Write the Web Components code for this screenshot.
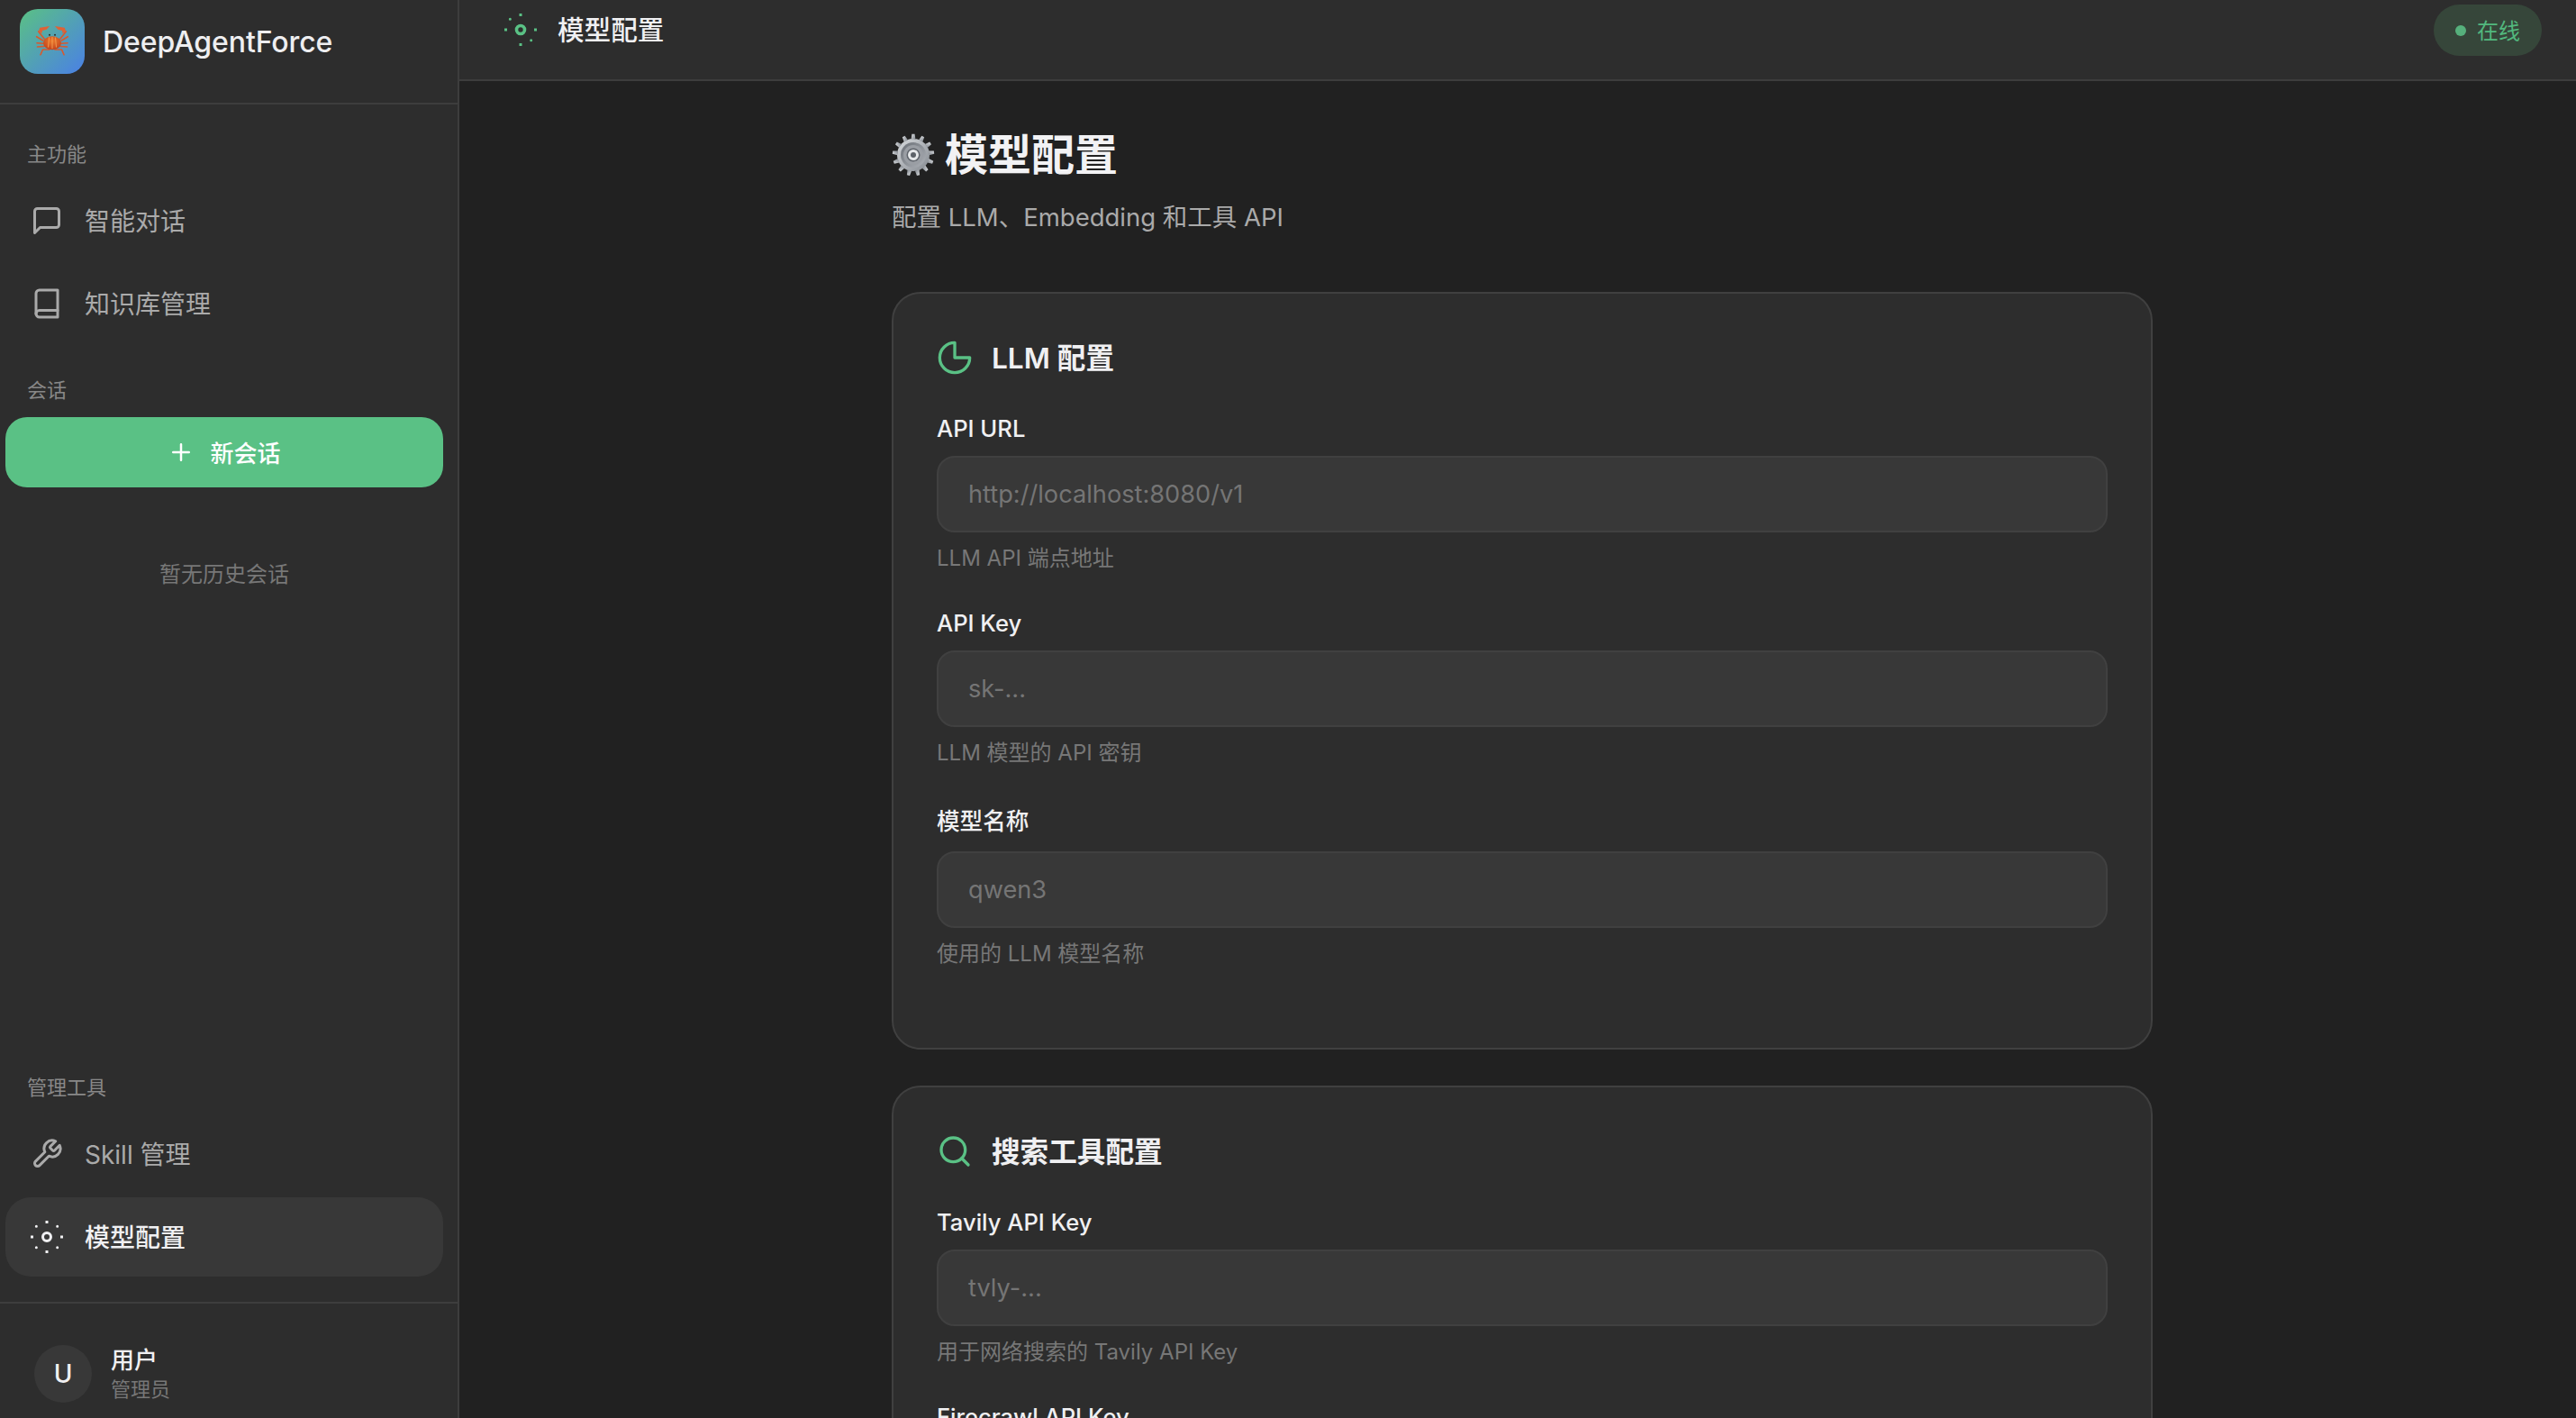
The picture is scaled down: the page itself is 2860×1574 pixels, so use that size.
<!DOCTYPE html>
<html lang="zh">
<head>
<meta charset="utf-8">
<title>DeepAgentForce</title>
<style>
  html, body { margin: 0; height: 100%; overflow: hidden; background: #212121; }
  body { font-family: Inter, "Noto Sans CJK SC", sans-serif; }
</style>
</head>
<body>
<app-shell>
  <side-bar slot="side">
    <section-label style="--top:40px">主功能</section-label>
    <nav-item icon="chat">智能对话</nav-item>
    <nav-item icon="book">知识库管理</nav-item>
    <section-label style="--top:33px">会话</section-label>
    <new-chat-button>新会话</new-chat-button>
    <empty-note>暂无历史会话</empty-note>
    <side-spacer></side-spacer>
    <section-label style="--top:0px">管理工具</section-label>
    <nav-item icon="wrench">Skill 管理</nav-item>
    <nav-item icon="gear" active>模型配置</nav-item>
  </side-bar>
  <top-bar slot="top">模型配置</top-bar>
  <config-page>
    <page-title sub="配置 LLM、Embedding 和工具 API">模型配置</page-title>
    <config-card icon="pie" heading="LLM 配置">
      <config-field label="API URL" placeholder="http://localhost:8080/v1" hint="LLM API 端点地址"></config-field>
      <config-field label="API Key" placeholder="sk-..." hint="LLM 模型的 API 密钥"></config-field>
      <config-field label="模型名称" placeholder="qwen3" hint="使用的 LLM 模型名称"></config-field>
    </config-card>
    <config-card icon="search" heading="搜索工具配置">
      <config-field label="Tavily API Key" placeholder="tvly-..." hint="用于网络搜索的 Tavily API Key"></config-field>
      <config-field label="Firecrawl API Key"></config-field>
    </config-card>
  </config-page>
</app-shell>

<script>
const AXIS_DOTS = '<path stroke-linecap="square" d="M12 1h.01M12 23h.01M1 12h.01M23 12h.01"/>';
const ICONS = {
  chat: '<path d="M21 15a2 2 0 0 1-2 2H7l-4 4V5a2 2 0 0 1 2-2h14a2 2 0 0 1 2 2z"/>',
  book: '<path d="M4 19.5A2.5 2.5 0 0 1 6.5 17H20"/><path d="M6.5 2H20v20H6.5A2.5 2.5 0 0 1 4 19.5v-15A2.5 2.5 0 0 1 6.5 2z"/>',
  wrench: '<path d="M14.7 6.3a1 1 0 0 0 0 1.4l1.6 1.6a1 1 0 0 0 1.4 0l3.77-3.77a6 6 0 0 1-7.94 7.94l-6.91 6.91a2.12 2.12 0 0 1-3-3l6.91-6.91a6 6 0 0 1 7.94-7.94l-3.76 3.76z"/>',
  gear: '<circle cx="12" cy="12" r="3"/>' + AXIS_DOTS + '<path d="M4.22 4.22h.01M19.78 19.78h.01M4.22 19.78h.01M19.78 4.22h.01"/>',
  gearTop: '<circle cx="12" cy="12" r="3" stroke-width="2.4"/>' + AXIS_DOTS + '<path d="M4.22 4.22h.01M19.78 19.78h.01"/>',
  pie: '<path d="M22 12A10 10 0 1 1 12 2v10z"/>',
  search: '<circle cx="11" cy="11" r="8"/><path d="M21 21l-4.35-4.35"/>',
  plus: '<path d="M12 5v14M5 12h14"/>'
};
function icon(name, size) {
  return `<svg width="${size}" height="${size}" viewBox="0 0 24 24" fill="none" stroke="currentColor" stroke-width="2" stroke-linecap="round" stroke-linejoin="round">${ICONS[name]}</svg>`;
}

class AppShell extends HTMLElement {
  constructor() {
    super();
    this.attachShadow({ mode: "open" }).innerHTML = `
      <style>
        :host { display: grid; grid-template-columns: 510px 1fr; grid-template-rows: 90px 1fr; height: 1574px; overflow: hidden; }
        .side { grid-row: 1 / 3; min-height: 0; }
        .top { grid-column: 2; }
        .main { grid-column: 2; grid-row: 2; min-height: 0; overflow: hidden; }
      </style>
      <div class="side"><slot name="side"></slot></div>
      <div class="top"><slot name="top"></slot></div>
      <div class="main"><slot></slot></div>`;
  }
}

class SideBar extends HTMLElement {
  constructor() {
    super();
    this.attachShadow({ mode: "open" }).innerHTML = `
      <style>
        :host { display: flex; flex-direction: column; height: 1574px; box-sizing: border-box; background: #2d2d2d; border-right: 2px solid #3d3d3d; }
        .brand { display: flex; align-items: center; gap: 20px; flex: none; height: 116px; box-sizing: border-box; padding: 10px 22px 32px; border-bottom: 2px solid #3d3d3d; }
        .logo { width: 72px; height: 72px; border-radius: 20px; background: linear-gradient(135deg, #5ac184, #4a80e6); display: flex; align-items: center; justify-content: center; }
        .name { font-size: 32px; font-weight: 500; color: #eeeef0; letter-spacing: -0.1px; }
        .nav { flex: 1; min-height: 0; display: flex; flex-direction: column; }
        .foot { flex: none; height: 129px; box-sizing: border-box; margin-top: 24px; border-top: 2px solid #3d3d3d; padding: 46px 38px 0; display: flex; gap: 21px; }
        .avatar { width: 64px; height: 64px; border-radius: 50%; background: #383838; color: #f0f0f2; font-size: 28px; font-weight: 500; display: flex; align-items: center; justify-content: center; }
        .who { display: flex; flex-direction: column; }
        .user { font-size: 26px; line-height: 34px; color: #f0f0f2; font-weight: 500; }
        .role { font-size: 22px; line-height: 30px; color: #777; }
      </style>
      <div class="brand">
        <div class="logo">
          <svg width="40" height="40" viewBox="0 0 40 40" fill="none">
            <defs><radialGradient id="shell" cx="50%" cy="35%" r="70%"><stop offset="0" stop-color="#ec7a2c"/><stop offset="1" stop-color="#bf3f1c"/></radialGradient></defs>
            <g stroke="#d9582c" stroke-width="1.6" stroke-linecap="round" stroke-linejoin="round">
              <path d="M11.3 17.3 4.7 9"/><path d="M28.7 17.3 35.3 9"/>
              <path d="M9.7 19 2.7 14.7"/><path d="M30.3 19l7-4.3"/>
              <path d="M10 22.3 3 21.7"/><path d="M30 22.3l7-.6"/>
              <path d="M11 25.5 3.5 26"/><path d="M29 25.5l7.5.5"/>
              <path d="M17 29H9.5L7 34.7"/><path d="M23 29h7.500L33 34.700"/>
            </g>
            <path d="M4.700 9 6.300 4.700 17 3 13.700 6.700 9 8 8.500 11z" fill="#df6236"/>
            <path d="M35.300 9 33.700 4.700 23 3 26.300 6.700 31 8 31.500 11z" fill="#df6236"/>
            <ellipse cx="20" cy="21.700" rx="10" ry="7.500" fill="url(#shell)"/>
            <path d="M20 15v13M16.500 15.500l-1 11M23.500 15.500l1 11" stroke="#f4a052" stroke-width=".9"/>
            <circle cx="17" cy="12.800" r="1" fill="#2e2a28"/><circle cx="23" cy="12.800" r="1" fill="#2e2a28"/>
          </svg>
        </div>
        <div class="name">DeepAgentForce</div>
      </div>
      <div class="nav"><slot></slot></div>
      <div class="foot">
        <div class="avatar">U</div>
        <div class="who"><span class="user">用户</span><span class="role">管理员</span></div>
      </div>`;
  }
}

class SectionLabel extends HTMLElement {
  constructor() {
    super();
    this.attachShadow({ mode: "open" }).innerHTML = `
      <style>
        :host { display: block; flex: none; margin-top: var(--top, 0px); margin-bottom: 15px; padding: 0 30px; height: 30px; font-size: 22px; line-height: 30px; color: #888; }
      </style><slot></slot>`;
  }
}

class NavItem extends HTMLElement {
  connectedCallback() {
    if (this.shadowRoot) return;
    const active = this.hasAttribute("active");
    this.attachShadow({ mode: "open" }).innerHTML = `
      <style>
        :host { display: flex; flex: none; align-items: center; gap: 24px; height: 88px; margin: 0 16px 4px 6px; padding-left: 28px; border-radius: 28px; font-size: 28px; color: ${active ? "#f0f0f2" : "#aaa"}; background: ${active ? "#383838" : "transparent"}; font-weight: ${active ? 500 : 400}; }
        svg { flex: none; }
        span { padding-bottom: 2px; }
      </style>${icon(this.getAttribute("icon"), 36)}<span><slot></slot></span>`;
  }
}

class NewChatButton extends HTMLElement {
  constructor() {
    super();
    this.attachShadow({ mode: "open" }).innerHTML = `
      <style>
        :host { display: flex; flex: none; align-items: center; justify-content: center; gap: 17px; height: 78px; margin: 0 16px 0 6px; border-radius: 24px; background: #5ac185; color: #fff; font-size: 26px; font-weight: 500; }
        span { padding-bottom: 2px; }
      </style>${icon("plus", 30)}<span><slot></slot></span>`;
  }
}

class EmptyNote extends HTMLElement {
  constructor() {
    super();
    this.attachShadow({ mode: "open" }).innerHTML = `
      <style>
        :host { display: block; flex: none; margin: 79px 16px 0 6px; text-align: center; font-size: 24px; line-height: 36px; color: #777; }
      </style><slot></slot>`;
  }
}

class SideSpacer extends HTMLElement {
  constructor() {
    super();
    this.attachShadow({ mode: "open" }).innerHTML = `<style>:host { display: block; flex: 1; }</style>`;
  }
}

class TopBar extends HTMLElement {
  constructor() {
    super();
    this.attachShadow({ mode: "open" }).innerHTML = `
      <style>
        :host { display: flex; justify-content: space-between; height: 90px; box-sizing: border-box; padding: 5px 38px 0 50px; background: #2d2d2d; border-bottom: 2px solid #3d3d3d; }
        .left { display: flex; align-items: center; gap: 23px; height: 56px; color: #f0f0f2; font-size: 29.6px; font-weight: 500; }
        .left svg { color: #5ac185; }
        .left span, .badge span:last-child { padding-bottom: 3px; }
        .badge { display: flex; align-items: center; gap: 12px; height: 57px; padding: 0 24px; border-radius: 29px; background: #36463a; color: #52b87e; font-size: 24px; }
        .dot { width: 12px; height: 12px; border-radius: 50%; background: #56b07c; }
      </style>
      <div class="left">${icon("gearTop", 36)}<span><slot></slot></span></div>
      <div class="badge"><span class="dot"></span><span>在线</span></div>`;
  }
}

class ConfigPage extends HTMLElement {
  constructor() {
    super();
    this.attachShadow({ mode: "open" }).innerHTML = `
      <style>
        :host { display: flex; flex-direction: column; align-items: center; padding: 56px 0 0 10px; }
        .col { width: 1400px; display: flex; flex-direction: column; gap: 40px; }
      </style>
      <div class="col"><slot></slot></div>`;
  }
}

class PageTitle extends HTMLElement {
  connectedCallback() {
    if (this.shadowRoot) return;
    const teeth = Array.from({ length: 13 }, (_, i) => `<path d="M21.600 6.500 22.400 .8h3.200l.8 5.700z" transform="rotate(${(i * 360 / 13).toFixed(1)} 24 24)"/>`).join("");
    this.attachShadow({ mode: "open" }).innerHTML = `
      <style>
        :host { display: block; margin-bottom: 23px; }
        h1 { margin: 0; display: flex; align-items: center; gap: 11px; height: 52px; font-size: 48px; font-weight: 600; color: #f2f2f4; line-height: 52px; }
        p { margin: 23px 0 0; font-size: 27.5px; line-height: 40px; color: #aaa; }
      </style>
      <h1>
        <svg width="48" height="48" viewBox="0 0 48 48">
          <defs>
            <linearGradient id="steel" x1="0" y1="0" x2="1" y2="1"><stop offset="0" stop-color="#d8dbde"/><stop offset="1" stop-color="#858a91"/></linearGradient>
            <linearGradient id="groove" x1="0" y1="0" x2="1" y2="1"><stop offset="0" stop-color="#6a6f76"/><stop offset="1" stop-color="#aeb2b8"/></linearGradient>
          </defs>
          <g fill="url(#steel)">
            <circle cx="24" cy="24" r="18"/>
            ${teeth}
          </g>
          <circle cx="24" cy="24" r="14" fill="url(#groove)"/>
          <circle cx="24" cy="24" r="11" fill="#9a9ea4"/>
          <circle cx="24" cy="24" r="7.500" fill="#5f646b"/>
          <circle cx="24" cy="24" r="6" fill="#e6e8ea"/>
          <circle cx="24" cy="24" r="3" fill="#5d6269"/>
        </svg>
        <span><slot></slot></span>
      </h1>
      <p>${this.getAttribute("sub")}</p>`;
  }
}

class ConfigCard extends HTMLElement {
  connectedCallback() {
    if (this.shadowRoot) return;
    this.attachShadow({ mode: "open" }).innerHTML = `
      <style>
        :host { display: block; box-sizing: border-box; padding: 46px 48px 50px; background: #2d2d2d; border: 2px solid #404040; border-radius: 32px; }
        h2 { margin: 0 0 36px; display: flex; align-items: center; gap: 21px; height: 50px; font-size: 31.6px; font-weight: 600; color: #f0f0f2; }
        svg { color: #5ac185; flex: none; }
        span { padding-bottom: 4px; }
      </style>
      <h2>${icon(this.getAttribute("icon"), 40)}<span>${this.getAttribute("heading")}</span></h2>
      <slot></slot>`;
  }
}

class ConfigField extends HTMLElement {
  connectedCallback() {
    if (this.shadowRoot) return;
    const label = this.getAttribute("label");
    const placeholder = this.getAttribute("placeholder");
    // labels in plain CJK came out taller in the reference
    const labelHeight = /^[\u4e00-\u9fff]+$/.test(label) ? 43 : 36;
    this.attachShadow({ mode: "open" }).innerHTML = `
      <style>
        :host { display: block; margin-bottom: 37px; }
        .label { font-size: 25.6px; line-height: ${labelHeight}px; font-weight: 500; color: #f0f0f2; margin-bottom: 12px; }
        .input { box-sizing: border-box; height: 85px; padding: 0 33px; display: flex; align-items: center; background: #383838; border: 2px solid #404040; border-radius: 20px; font-size: 27.2px; color: #757575; }
        .hint { margin-top: 12px; font-size: 24px; line-height: 34px; color: #777; }
      </style>
      <div class="label">${label}</div>
      ${placeholder ? `<div class="input">${placeholder}</div><div class="hint">${this.getAttribute("hint")}</div>` : ""}`;
  }
}

customElements.define("app-shell", AppShell);
customElements.define("side-bar", SideBar);
customElements.define("section-label", SectionLabel);
customElements.define("nav-item", NavItem);
customElements.define("new-chat-button", NewChatButton);
customElements.define("empty-note", EmptyNote);
customElements.define("side-spacer", SideSpacer);
customElements.define("top-bar", TopBar);
customElements.define("config-page", ConfigPage);
customElements.define("page-title", PageTitle);
customElements.define("config-card", ConfigCard);
customElements.define("config-field", ConfigField);
</script>
</body>
</html>
